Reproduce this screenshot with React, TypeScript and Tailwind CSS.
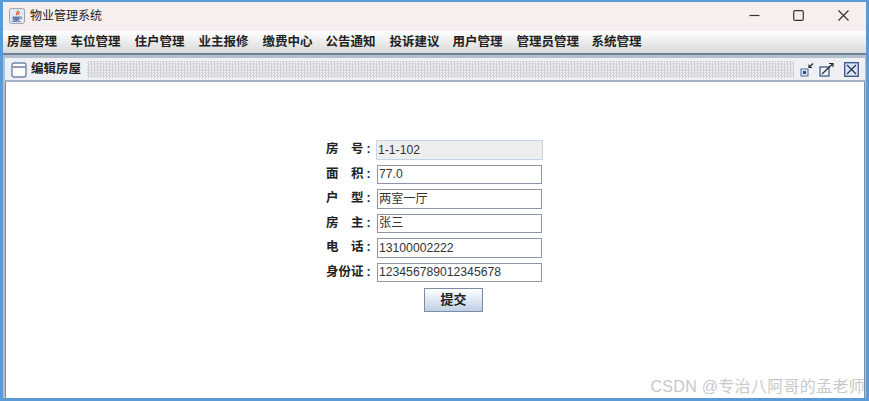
import React from 'react';

const cjk = "font-['Liberation_Sans','Noto_Sans_CJK_SC',sans-serif]";

const menus = [
  { label: '房屋管理', w: 'w-[63.5px]' },
  { label: '车位管理', w: 'w-[64px]' },
  { label: '住户管理', w: 'w-[64px]' },
  { label: '业主报修', w: 'w-[64px]' },
  { label: '缴费中心', w: 'w-[63px]' },
  { label: '公告通知', w: 'w-[64px]' },
  { label: '投诉建议', w: 'w-[63px]' },
  { label: '用户管理', w: 'w-[64px]' },
  { label: '管理员管理', w: 'w-[75px]' },
  { label: '系统管理', w: 'w-[64px]' },
];

const fields = [
  { label: '房　号', value: '1-1-102', disabled: true },
  { label: '面　积', value: '77.0' },
  { label: '户　型', value: '两室一厅' },
  { label: '房　主', value: '张三' },
  { label: '电　话', value: '13100002222' },
  { label: '身份证', value: '123456789012345678' },
];

const JavaIcon = () => (
  <svg width="16" height="16" viewBox="0 0 18 18">
    <rect x="0.5" y="0.5" width="17" height="17" rx="2.5" fill="#e4e8ef" stroke="#8d97a8" />
    <path d="M10 2.5c1 2-3 3-1.500 5.500M12 4.500c-1 1.500-2.500 2-1.500 3.500" fill="none" stroke="#d9541e" strokeWidth="1.300" />
    <path d="M4 9.500h8v2c0 2-1.500 3-4 3s-4-1-4-3z" fill="#5f7fb0" />
    <path d="M12 10h2v2h-2" fill="none" stroke="#5f7fb0" />
    <path d="M3 15h10" stroke="#4a6a9c" />
  </svg>
);

export default function App() {
  return (
    <div className={`w-[869px] h-[401px] flex flex-col overflow-hidden bg-white border-x-[3px] border-t-2 border-b-[3px] border-[#5b9bd5] ${cjk}`}>
      {/* title bar */}
      <div className="h-[29px] shrink-0 flex items-center bg-[#f6efee] pl-[6px] pb-[2px]">
        <JavaIcon />
        <span className="ml-[5px] text-[12px] text-[#222]">物业管理系统</span>
        <div className="ml-auto flex items-center">
          <div className="w-[44px] flex justify-center">
            <svg width="11" height="11" viewBox="0 0 11 11"><path d="M0.500 5.500h10" stroke="#333" strokeWidth="1.200" /></svg>
          </div>
          <div className="w-[45px] flex justify-center">
            <svg width="11" height="11" viewBox="0 0 11 11"><rect x="0.700" y="0.700" width="9.600" height="9.600" rx="1.200" fill="none" stroke="#333" strokeWidth="1.200" /></svg>
          </div>
          <div className="w-[45px] flex justify-center">
            <svg width="11" height="11" viewBox="0 0 11 11"><path d="M0.500 0.500l10 10M10.500 0.500l-10 10" stroke="#333" strokeWidth="1.200" /></svg>
          </div>
        </div>
      </div>

      {/* menu bar */}
      <div className="h-[22px] shrink-0 flex items-center pl-[4px] pt-[1px] bg-gradient-to-b from-white to-[#d9d9d9]">
        {menus.map((m) => (
          <span key={m.label} className={`${m.w} text-[12.500px] font-bold text-[#222] whitespace-nowrap`}>{m.label}</span>
        ))}
      </div>

      {/* desktop pane */}
      <div className="flex-1 min-h-0 flex flex-col bg-[#b4bfce] border-t-2 border-[#6f7f93] pt-[3px] pl-[2px] pr-[1px]">
        <div className="flex-1 min-h-0 flex flex-col relative bg-white rounded-t-[2px]">
          {/* internal frame title */}
          <div className="h-[24px] shrink-0 flex items-center bg-[#eef0f3] border-b-2 border-[#a3b4c8] pl-[6px] pt-[1px]">
            <svg width="16" height="16" viewBox="0 0 16 16">
              <rect x="1" y="1" width="14" height="14" rx="2" fill="#fff" stroke="#6d87a6" strokeWidth="1.400" />
              <path d="M1.500 5h13" stroke="#6d87a6" strokeWidth="1.600" />
            </svg>
            <span className="ml-[4px] w-[56px] text-[12.500px] font-bold text-[#222] whitespace-nowrap">编辑房屋</span>
            <div className="w-[707px] h-[17px] bg-[repeating-conic-gradient(#cdd0d4_0%_25%,#eef0f3_0%_50%)] bg-[length:3px_3px]" />
            <div className="flex items-center ml-[6px]">
              <svg width="14" height="16" viewBox="0 0 14 16">
                <rect x="1" y="7" width="7" height="7" fill="#dfe6f2" stroke="#4e6a9c" />
                <rect x="3" y="9" width="3" height="3" fill="#2d4a7c" />
                <path d="M13 1.500L9 5.500M9 2.500v3h3" fill="none" stroke="#222" strokeWidth="1.100" />
              </svg>
              <svg className="ml-[5px]" width="15" height="16" viewBox="0 0 15 16">
                <rect x="1" y="5" width="9" height="9" fill="#eef1f6" stroke="#3f5b8f" strokeWidth="1.300" />
                <path d="M3 12L13.500 2M10 1.500h4v3.500" fill="none" stroke="#222" strokeWidth="1.100" />
              </svg>
              <svg className="ml-[10px]" width="15" height="15" viewBox="0 0 15 15">
                <rect x="0.700" y="0.700" width="13.600" height="13.600" fill="#dfe6f2" stroke="#3f5b8f" strokeWidth="1.400" />
                <path d="M3 3l9 9M12 3l-9 9" stroke="#1f3560" strokeWidth="1.300" />
              </svg>
            </div>
          </div>

          {/* form */}
          <div className="flex-1 border-x border-[#7f8da0] flex flex-col items-center pt-[58px]">
            <div className="flex flex-col gap-[5px] w-[218px]">
              {fields.map((f) => (
                <div key={f.value} className="flex items-center h-[19.500px]">
                  <div className="w-[50px] text-[12.500px] font-bold text-[#222] whitespace-nowrap">
                    {f.label}<span className="ml-[3px]">:</span>
                  </div>
                  <div className={`h-full flex items-center pl-[1px] text-[12.200px] text-[#333] ${f.disabled ? 'w-[167px] bg-[#eeeeee] border border-[#c5d5e8]' : 'w-[165px] ml-[1px] bg-white border border-[#8b97a8]'}`}>
                    {f.value}
                  </div>
                </div>
              ))}
              <button className="mt-[1px] ml-[98px] w-[59px] h-[24px] bg-gradient-to-b from-white to-[#bfd0e4] border border-[#7a8ea8] text-[13px] font-bold text-[#222]">
                提交
              </button>
            </div>
          </div>

          {/* watermark */}
          <span className="absolute right-0 bottom-[-1px] text-[16px] text-[#c8c8c8] whitespace-nowrap tracking-[0.300px]">CSDN @专治八阿哥的孟老师</span>
        </div>
      </div>
    </div>
  );
}
